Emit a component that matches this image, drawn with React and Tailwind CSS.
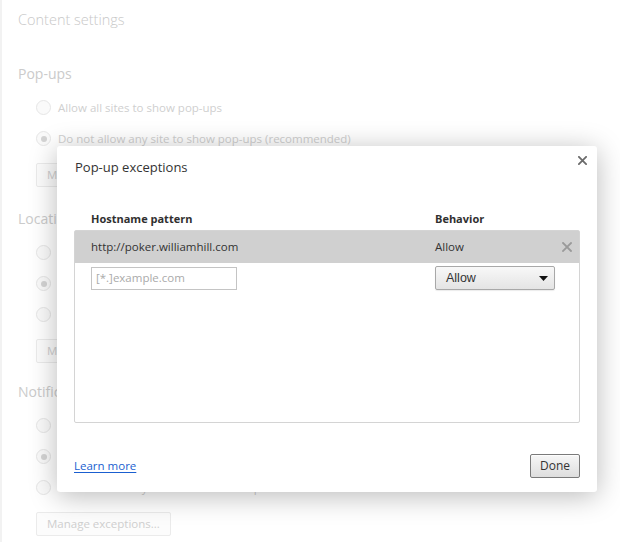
import React from "react";

const font = { fontFamily: '"Open Sans", "Noto Sans", sans-serif' };

const sections = [
  {
    title: "Pop-ups",
    gap: "mt-[32px]",
    options: [
      { label: "Allow all sites to show pop-ups", checked: false },
      { label: "Do not allow any site to show pop-ups (recommended)", checked: true },
    ],
  },
  {
    title: "Location",
    gap: "mt-[22px]",
    options: [
      { label: "Allow all sites to track your physical location", checked: false },
      { label: "Ask when a site tries to track your physical location (recommended)", checked: true },
      { label: "Do not allow any site to track your physical location", checked: false },
    ],
  },
  {
    title: "Notifications",
    gap: "mt-[19px]",
    options: [
      { label: "Allow all sites to show desktop notifications", checked: false },
      { label: "Ask when a site wants to show desktop notifications (recommended)", checked: true },
      { label: "Do not allow any site to show desktop notifications", checked: false },
    ],
  },
];

const Radio = ({ checked }) => (
  <span className="w-[15px] h-[15px] rounded-full border border-[#e6e6e6] bg-[#fafafa] flex items-center justify-center shrink-0">
    {checked && <span className="w-[6px] h-[6px] rounded-full bg-[#d4d4d4]" />}
  </span>
);

const XIcon = ({ size, color, stroke }) => (
  <svg width={size} height={size} viewBox="0 0 10 10">
    <path d="M1 1L9 9M9 1L1 9" stroke={color} strokeWidth={stroke} strokeLinecap="square" />
  </svg>
);

export default function App() {
  return (
    <div className="relative w-[620px] h-[542px] bg-white overflow-hidden text-[11.5px]" style={font}>
      {/* faded settings page behind the dialog */}
      <div className="h-full border-l-2 border-[#f2f2f2] pl-[16px] pt-[8px] text-[#cfcfcf]">
        <div className="h-[24px] leading-[24px] text-[14.5px] text-[#c8c8c8] font-light">Content settings</div>
        {sections.map((s) => (
          <div key={s.title} className={s.gap}>
            <div className="h-[20px] leading-[20px] text-[14px] text-[#cbcbcb]">{s.title}</div>
            <div className="mt-[8px] pl-[18px]">
              {s.options.map((o) => (
                <div key={o.label} className="h-[31px] flex items-center gap-[7px]">
                  <Radio checked={o.checked} />
                  <span>{o.label}</span>
                </div>
              ))}
              <button className="mt-[9px] h-[24px] px-[10px] border border-[#ebebeb] rounded-[2px] bg-[#fcfcfc] text-[#cfcfcf] text-[11.5px]">
                Manage exceptions...
              </button>
            </div>
          </div>
        ))}
      </div>

      {/* dialog */}
      <div className="absolute left-[57px] top-[146px] w-[540px] h-[346px] bg-white rounded-[3px] shadow-[0_4px_28px_rgba(0,0,0,0.28)] px-[17px] flex flex-col">
        <div className="flex items-start justify-between pt-[9px]">
          <div className="pt-[2px] pl-[1px] text-[13px] text-[#333] leading-[20px]">Pop-up exceptions</div>
          <div className="mr-[-7px] pt-[1px]">
            <XIcon size={9} color="#6b6b6b" stroke={2} />
          </div>
        </div>

        <div className="mt-[33px] flex text-[11px] font-bold text-[#303030] h-[18px] leading-[18px]">
          <div className="pl-[17px] w-[361px]">Hostname pattern</div>
          <div>Behavior</div>
        </div>

        <div className="mt-[2px] h-[193px] border border-[#d4d4d4] rounded-[2px]">
          <div className="h-[32px] bg-[#d0d0d0] flex items-center text-[#333]">
            <div className="pl-[16px] w-[360px]">http://poker.williamhill.com</div>
            <div className="flex-1">Allow</div>
            <div className="pr-[7px]">
              <XIcon size={10} color="#9a9a9a" stroke={1.8} />
            </div>
          </div>
          <div className="flex items-center pt-[3px]">
            <div className="pl-[16px] w-[360px]">
              <div className="w-[146px] h-[23px] border border-[#c4c4c4] flex items-center px-[4px] text-[#aaa]">
                [*.]example.com
              </div>
            </div>
            <div
              className="w-[120px] h-[24px] border border-[#a8a8a8] rounded-[2px] bg-gradient-to-b from-[#f8f8f8] to-[#e4e4e4] flex items-center justify-between pl-[10px] pr-[6px] text-[#333] text-[12.5px] shadow-[0_1px_1px_rgba(0,0,0,0.08)]"
              style={{ fontFamily: '"Liberation Sans", Arial, sans-serif' }}
            >
              <span>Allow</span>
              <svg width="9" height="5" viewBox="0 0 9 5">
                <path d="M0 0H9L4.5 5Z" fill="#111" />
              </svg>
            </div>
          </div>
        </div>

        <div className="mt-[31px] flex items-center justify-between">
          <a className="text-[#1a5fd0] underline underline-offset-[2px] text-[11.5px]">Learn more</a>
          <button className="w-[50px] h-[24px] border border-[#7a7a7a] rounded-[2px] bg-gradient-to-b from-[#f6f6f6] to-[#dedede] text-[#333] text-[12px] shadow-[inset_0_1px_0_rgba(255,255,255,0.8)]">
            Done
          </button>
        </div>
      </div>
    </div>
  );
}
